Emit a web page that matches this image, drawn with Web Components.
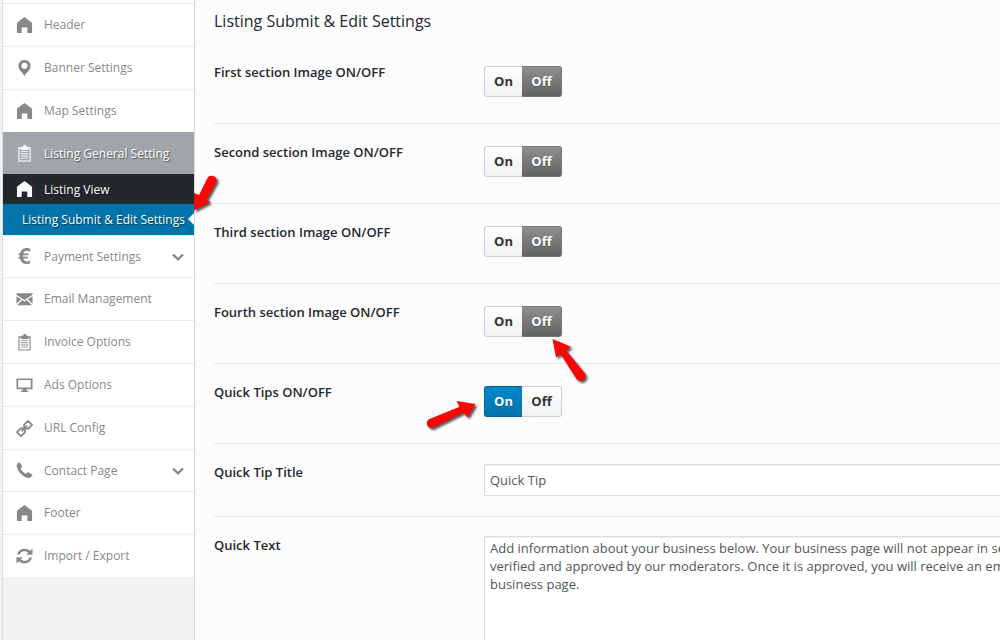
<!DOCTYPE html>
<html lang="en">
<head>
<meta charset="utf-8">
<meta name="viewport" content="width=device-width, initial-scale=1">
<title>Listing Submit &amp; Edit Settings</title>
<style>
  body {
    margin: 0;
    background: #f1f1f1;
    color: #333333;
    font-family: "Open Sans", "Noto Sans", sans-serif;
    font-size: 13px;
    line-height: 18px;
  }
</style>
</head>
<body>
<options-page>
  <side-menu slot="menu">
    <menu-item icon="home" label="Header"></menu-item>
    <menu-item icon="pin" label="Banner Settings"></menu-item>
    <menu-item icon="home" label="Map Settings"></menu-item>
    <menu-item icon="clipboard" label="Listing General Setting" state="open">
      <menu-item icon="home" label="Listing View" state="sub"></menu-item>
      <menu-item label="Listing Submit &amp; Edit Settings" state="current"></menu-item>
    </menu-item>
    <menu-item icon="euro" label="Payment Settings" expandable></menu-item>
    <menu-item icon="mail" label="Email Management"></menu-item>
    <menu-item icon="clipboard" label="Invoice Options"></menu-item>
    <menu-item icon="screen" label="Ads Options"></menu-item>
    <menu-item icon="link" label="URL Config"></menu-item>
    <menu-item icon="phone" label="Contact Page" expandable></menu-item>
    <menu-item icon="home" label="Footer"></menu-item>
    <menu-item icon="refresh" label="Import / Export"></menu-item>
  </side-menu>
  <settings-panel heading="Listing Submit &amp; Edit Settings">
    <toggle-setting label="First section Image ON/OFF" value="off"></toggle-setting>
    <toggle-setting label="Second section Image ON/OFF" value="off"></toggle-setting>
    <toggle-setting label="Third section Image ON/OFF" value="off"></toggle-setting>
    <toggle-setting label="Fourth section Image ON/OFF" value="off"></toggle-setting>
    <toggle-setting label="Quick Tips ON/OFF" value="on"></toggle-setting>
    <text-setting label="Quick Tip Title" value="Quick Tip"></text-setting>
    <textarea-setting label="Quick Text">Add information about your business below. Your business page will not appear in search
verified and approved by our moderators. Once it is approved, you will receive an email
business page.</textarea-setting>
  </settings-panel>
  <callout-arrows slot="overlay"></callout-arrows>
</options-page>

<script>
const ICONS = {
  home: `<path d="M9 0 17 6V17H12V11H6V17H1V6Z"/>`,
  pin: `<path fill-rule="evenodd" d="M9 0C5.200 0 2.500 2.800 2.500 6.200 2.500 10.500 7 13.500 9 17 11 13.500 15.500 10.500 15.500 6.200 15.500 2.800 12.800 0 9 0ZM9 3A3.200 3.200 0 1 1 9 9.400 3.200 3.200 0 0 1 9 3Z"/>`,
  clipboard: `<path fill-rule="evenodd" d="M2.500 2.500H6V1.500H8V0H10.500V1.500H12.500V2.500H15.500V17.500H2.500ZM3.700 4V16.300H14.300V4H13V5.200H5.500V4Z"/><path d="M5 6.500H13V7.500H5ZM5 8.800H13V9.800H5ZM5 11.100H13V12.100H5ZM5 13.400H13V14.400H5Z"/>`,
  euro: `<path d="M15 .8V4C14 3.200 12.800 2.800 11.500 2.800 9.400 2.800 8.200 4 7.800 5.800H13.500L13 7.700H7.500V9.300H12.800L12.300 11.200H7.800C8.300 13.200 9.600 14.300 11.600 14.300 12.900 14.300 14 13.900 15 13.200V16.200C14 16.800 12.700 17 11.300 17 7.400 17 5 14.800 4.400 11.200H2.300L2.800 9.300H4.200V7.700H2.300L2.800 5.800H4.400C5 2.300 7.600 0 11.400 0 12.800 0 14 .3 15 .8Z"/>`,
  mail: `<path d="M.5 2.500H17.500V4L9 9.500.5 4ZM.5 5.500 5.500 8.800.5 13.500ZM17.500 5.500V13.500L12.500 8.800ZM6.800 9.600 9 11 11.200 9.600 17 15H1Z"/>`,
  screen: `<path fill-rule="evenodd" d="M.5 1.500H17.500V13H11V14.500H13V16H5V14.500H7V13H.5ZM2.300 3.300V11.200H15.700V3.300Z"/>`,
  link: `<g fill="none" stroke="currentColor" stroke-width="1.900" stroke-linejoin="round"><path d="M8.600 5 12.800 1 17 5.200 12.700 9.300 8.600 8.200Z"/><path d="M9.400 9.800 5.300 8.700 1 12.800 5.200 17 9.400 13Z"/><path d="M6 12 12 6"/></g>`,
  phone: `<path d="M4 .3 6.500 4.500 5 6.800C6 9.200 8 11.300 10.500 12.500L12.700 10.700 17.500 13.500C17.300 15.500 15.200 17 13 17 7 15.800 1.300 9.500.7 4.200.7 2.200 2 .6 4 .3Z"/>`,
  refresh: `<path d="M1 7C2 3.200 5 .7 9 .7 11.300.7 13.300 1.500 14.900 3L17.500.7V7.200H10.800L13 5C11.900 4 10.600 3.400 9 3.400 6.500 3.400 4.500 4.800 3.700 7ZM17 10C16 13.800 13 16.300 9 16.300 6.700 16.300 4.700 15.500 3.100 14L.5 16.500V9.800H7.200L5 12C6.100 13 7.400 13.600 9 13.600 11.500 13.600 13.500 12.200 14.300 10Z"/>`,
};

class OptionsPage extends HTMLElement {
  constructor() {
    super();
    this.attachShadow({ mode: "open" });
    this.shadowRoot.innerHTML = `
      <style>
        :host {
          display: flex;
          position: relative;
          min-height: 100vh;
          box-sizing: border-box;
          padding-left: 2px;
          overflow: hidden;
        }
      </style>
      <slot name="menu"></slot>
      <slot></slot>
      <slot name="overlay"></slot>
    `;
  }
}

class SideMenu extends HTMLElement {
  constructor() {
    super();
    this.attachShadow({ mode: "open" });
    this.shadowRoot.innerHTML = `
      <style>
        :host {
          display: block;
          flex: 0 0 193px;
          box-sizing: border-box;
          border-left: 1px solid #dcdcdc;
          border-right: 1px solid #d8d8d8;
          background: #f2f2f2;
        }
        nav {
          border-top: 3px solid #ffffff;
        }
      </style>
      <nav aria-label="Sections"><slot></slot></nav>
    `;
  }
}

class MenuItem extends HTMLElement {
  connectedCallback() {
    if (!this.shadowRoot) {
      this.attachShadow({ mode: "open" });
    }
    this.render();
  }

  render() {
    const icon = this.getAttribute("icon");
    const label = this.getAttribute("label") ?? "";
    const chevron = this.hasAttribute("expandable")
      ? `<svg class="chevron" viewBox="0 0 12 8" aria-hidden="true"><path d="M1 1.500 6 6.300 11 1.500" fill="none" stroke="currentColor" stroke-width="2.400"/></svg>`
      : "";
    this.shadowRoot.innerHTML = `
      <style>
        :host {
          display: block;
        }
        a {
          display: flex;
          position: relative;
          align-items: center;
          gap: 11px;
          height: 43px;
          box-sizing: border-box;
          padding: 0 10px 0 13px;
          border-top: 1px solid #ececec;
          background: #ffffff;
          color: #888888;
          font-size: 12px;
          font-weight: 500;
          text-decoration: none;
          white-space: nowrap;
        }
        :host([expandable]) a {
          height: 42px;
        }
        .icon {
          flex: none;
          width: 17px;
          height: 17px;
          fill: currentColor;
        }
        .label {
          flex: 1;
        }
        .chevron {
          flex: none;
          width: 12px;
          height: 8px;
        }
        :host([state]) a {
          border-top: 0;
          color: #ffffff;
          text-shadow: 1px 1px 1px rgba(0, 0, 0, 0.5);
        }
        :host([state="open"]) a {
          height: 42px;
          padding-top: 1px;
          background: #a0a5aa;
        }
        :host([state="sub"]) a {
          height: 30px;
          padding-top: 1px;
          background: #23282d;
        }
        :host([state="current"]) a {
          height: 31px;
          padding: 0 0 0 19px;
          background: #0073aa;
        }
        :host([state="current"]) a::after {
          content: "";
          position: absolute;
          right: 0;
          top: 9px;
          border: 6px solid transparent;
          border-left: 0;
          border-right-color: #fcfcfc;
        }
      </style>
      <a href="#">
        ${icon ? `<svg class="icon" viewBox="0 0 18 18" aria-hidden="true">${ICONS[icon]}</svg>` : ""}
        <span class="label"></span>
        ${chevron}
      </a>
      <slot></slot>
    `;
    this.shadowRoot.querySelector(".label").textContent = label;
  }
}

class SettingsPanel extends HTMLElement {
  constructor() {
    super();
    this.attachShadow({ mode: "open" });
    this.shadowRoot.innerHTML = `
      <style>
        :host {
          display: block;
          flex: 1 0 900px;
          box-sizing: border-box;
          padding: 10px 19px 0;
          background: #fcfcfc;
        }
        h2 {
          margin: 0 0 12px;
          color: #23282d;
          font-size: 16px;
          font-weight: 400;
          line-height: 22px;
        }
      </style>
      <h2></h2>
      <slot></slot>
    `;
  }

  connectedCallback() {
    this.shadowRoot.querySelector("h2").textContent = this.getAttribute("heading") ?? "";
  }
}

const ROW_STYLE = `
  :host {
    display: flex;
    align-items: flex-start;
    box-sizing: border-box;
    border-bottom: 1px solid #e7e7e7;
  }
  .title {
    flex: 0 0 270px;
    padding-top: 19px;
    color: #23282d;
    font-weight: 600;
  }
  .field {
    flex: 1;
    padding: 20px 0;
  }
  input,
  textarea {
    display: block;
    width: 100%;
    box-sizing: border-box;
    margin: 0;
    border: 1px solid #dddddd;
    border-radius: 0;
    outline: 0;
    background: #ffffff;
    box-shadow: inset 0 1px 2px rgba(0, 0, 0, 0.07);
    color: #555555;
    font: inherit;
  }
`;

class ToggleSetting extends HTMLElement {
  connectedCallback() {
    if (!this.shadowRoot) {
      this.attachShadow({ mode: "open" });
      this.shadowRoot.addEventListener("click", this.handleClick);
    }
    this.render();
  }

  handleClick = (event) => {
    const button = event.target.closest("button");
    if (!button) return;
    this.setAttribute("value", button.value);
    this.render();
  };

  render() {
    const on = this.getAttribute("value") === "on";
    this.shadowRoot.innerHTML = `
      <style>
        ${ROW_STYLE}
        .field {
          padding: 22px 0 26px;
        }
        .switch {
          display: inline-flex;
          vertical-align: top;
        }
        button {
          height: 31px;
          box-sizing: border-box;
          margin: 0;
          padding: 0 0 2px;
          border: 1px solid #cfcfcf;
          background: linear-gradient(#fdfdfd, #f2f2f2);
          color: #333333;
          font: inherit;
          font-weight: 700;
          cursor: pointer;
        }
        .on {
          width: 38px;
          border-right: 0;
          border-radius: 3px 0 0 3px;
        }
        .off {
          width: 40px;
          border-left: 0;
          border-radius: 0 3px 3px 0;
        }
        button[aria-pressed="true"] {
          color: #ffffff;
          text-shadow: 0 1px 1px rgba(0, 0, 0, 0.3);
        }
        .on[aria-pressed="true"] {
          border-color: #006699;
          background: linear-gradient(#0088cc, #0073aa);
        }
        .off[aria-pressed="true"] {
          border-color: #777777;
          background: linear-gradient(#8f8f8f, #636363);
        }
      </style>
      <div class="title" id="title"></div>
      <div class="field">
        <div class="switch" role="group" aria-labelledby="title">
          <button class="on" type="button" value="on" aria-pressed="${on}">On</button>
          <button class="off" type="button" value="off" aria-pressed="${!on}">Off</button>
        </div>
      </div>
    `;
    this.shadowRoot.getElementById("title").textContent = this.getAttribute("label") ?? "";
  }
}

class TextSetting extends HTMLElement {
  constructor() {
    super();
    this.attachShadow({ mode: "open" });
    this.shadowRoot.innerHTML = `
      <style>
        ${ROW_STYLE}
        input {
          height: 32px;
          padding: 0 5px;
        }
      </style>
      <label class="title" for="field"></label>
      <div class="field"><input id="field" type="text"></div>
    `;
  }

  connectedCallback() {
    this.shadowRoot.querySelector("label").textContent = this.getAttribute("label") ?? "";
    this.shadowRoot.querySelector("input").value = this.getAttribute("value") ?? "";
  }
}

class TextareaSetting extends HTMLElement {
  constructor() {
    super();
    this.attachShadow({ mode: "open" });
    this.shadowRoot.innerHTML = `
      <style>
        ${ROW_STYLE}
        :host {
          border-bottom: 0;
        }
        .field {
          padding: 19px 0 0;
        }
        textarea {
          height: 120px;
          padding: 2px 5px;
          line-height: 18px;
          resize: none;
        }
      </style>
      <label class="title" for="field"></label>
      <div class="field"><textarea id="field"></textarea></div>
    `;
  }

  connectedCallback() {
    this.shadowRoot.querySelector("label").textContent = this.getAttribute("label") ?? "";
    this.shadowRoot.querySelector("textarea").value = this.textContent;
  }
}

// red pointers laid over the page
class CalloutArrows extends HTMLElement {
  constructor() {
    super();
    this.attachShadow({ mode: "open" });
    this.shadowRoot.innerHTML = `
      <style>
        :host {
          display: block;
          position: absolute;
          top: 0;
          left: 0;
          pointer-events: none;
        }
        svg {
          display: block;
          fill: #fb0505;
          filter: drop-shadow(2px 2px 1px rgba(0, 0, 0, 0.65));
        }
      </style>
      <svg width="640" height="480" viewBox="0 0 640 480" aria-hidden="true">
        <path d="M194 210.500V193L199 195 207.500 178C210 173.500 218.500 176 216.300 182L206.500 199.500 210.300 202Z"/>
        <path d="M552.500 339 571 346.700 566 350.500 584.500 373C588 378.500 581 384 576.500 379L560.500 354 556 357.500Z"/>
        <path d="M475.500 404 467.500 417.500 463.500 412.500 433 427.800C427 429.500 424.500 421.500 429.500 419L459.500 406.800 456.500 401Z"/>
      </svg>
    `;
  }
}

customElements.define("options-page", OptionsPage);
customElements.define("side-menu", SideMenu);
customElements.define("menu-item", MenuItem);
customElements.define("settings-panel", SettingsPanel);
customElements.define("toggle-setting", ToggleSetting);
customElements.define("text-setting", TextSetting);
customElements.define("textarea-setting", TextareaSetting);
customElements.define("callout-arrows", CalloutArrows);
</script>
</body>
</html>
